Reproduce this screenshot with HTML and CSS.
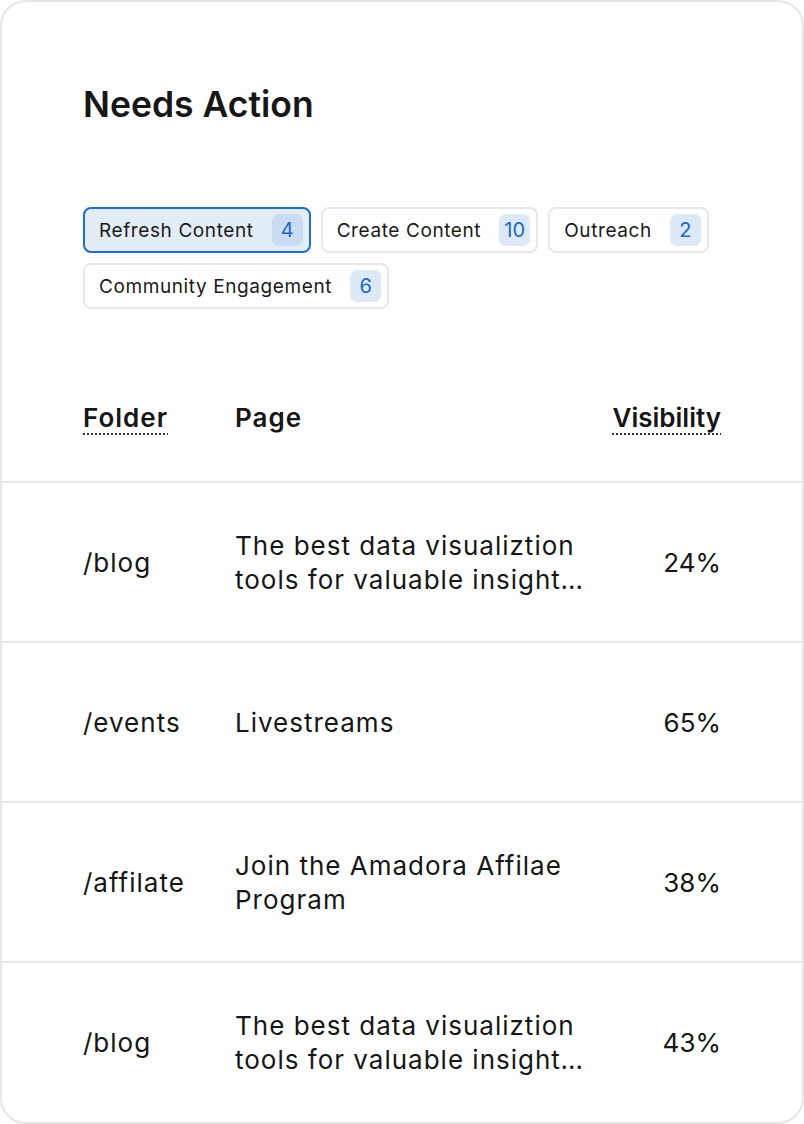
FILE: index.html
```html
<!DOCTYPE html>
<html lang="en">
<head>
    <meta charset="UTF-8">
    <meta name="viewport" content="width=device-width, initial-scale=1.0">
    <title>Needs Action</title>
    <link rel="stylesheet" href="styles.css">
</head>
<body>
    <div class="card">
        <div class="card-top">
            <h1>Needs Action</h1>
            <div class="filters">
                <button class="chip active">Refresh Content <span class="count">4</span></button>
                <button class="chip">Create Content <span class="count">10</span></button>
                <button class="chip">Outreach <span class="count">2</span></button>
                <button class="chip">Community Engagement <span class="count">6</span></button>
            </div>
        </div>

        <div class="table">
            <div class="row head">
                <span class="hint">Folder</span>
                <span>Page</span>
                <span class="num"><span class="hint">Visibility</span></span>
            </div>
            <div class="row">
                <span>/blog</span>
                <span class="page">The best data visualiztion tools for valuable insights and reporting</span>
                <span class="num">24%</span>
            </div>
            <div class="row">
                <span>/events</span>
                <span class="page">Livestreams</span>
                <span class="num">65%</span>
            </div>
            <div class="row">
                <span>/affilate</span>
                <span class="page">Join the Amadora Affilae Program</span>
                <span class="num">38%</span>
            </div>
            <div class="row">
                <span>/blog</span>
                <span class="page">The best data visualiztion tools for valuable insights and reporting</span>
                <span class="num">43%</span>
            </div>
        </div>
    </div>
</body>
</html>
```

FILE: styles.css
```css
body {
    margin: 0;
    font-family: 'Inter', 'Noto Sans', sans-serif;
    color: #1a1a1a;
    background-color: #fff;
}
.card {
    width: 804px;
    height: 1124px;
    box-sizing: border-box;
    border: 2px solid #e6e6e6;
    border-radius: 26px;
    overflow: hidden;
    background-color: #fff;
}
.card-top {
    padding: 81px 81px 0;
}
h1 {
    margin: 0;
    font-size: 35.5px;
    line-height: 44px;
    font-weight: 600;
    color: #171717;
}
.filters {
    display: flex;
    flex-wrap: wrap;
    gap: 10px;
    margin-top: 80px;
}
.chip {
    display: flex;
    align-items: center;
    gap: 18px;
    height: 46px;
    box-sizing: border-box;
    padding: 5px 6px 5px 14px;
    border: 2px solid #e8e8e8;
    border-radius: 8px;
    background-color: #fff;
    font-family: inherit;
    font-size: 19px;
    letter-spacing: 0.6px;
    color: #1a1a1a;
    cursor: pointer;
}
.chip.active {
    background-color: #e3edf8;
    border-color: #1f6fc7;
}
.count {
    min-width: 31px;
    height: 32px;
    line-height: 32px;
    padding: 0 2px;
    box-sizing: border-box;
    border-radius: 7px;
    background-color: #dde9f6;
    color: #1c68c4;
    text-align: center;
    font-size: 20px;
    letter-spacing: 0;
}
.chip.active .count {
    background-color: #c9dcf1;
}
.table {
    margin-top: 46px;
}
.row {
    display: grid;
    grid-template-columns: 152px 360px 1fr;
    align-items: center;
    height: 160px;
    box-sizing: border-box;
    padding: 2px 81px 0;
    border-top: 2px solid #e8e8e8;
    font-size: 26px;
    line-height: 34px;
    letter-spacing: 1px;
    color: #161616;
}
.row.head {
    height: auto;
    padding-top: 46px;
    padding-bottom: 46px;
    border-top: none;
    font-weight: 600;
    letter-spacing: 1px;
}
.hint {
    text-decoration: underline dotted #333;
    text-decoration-thickness: 2px;
    text-underline-offset: 6px;
}
.page {
    display: -webkit-box;
    -webkit-line-clamp: 2;
    -webkit-box-orient: vertical;
    overflow: hidden;
}
.num {
    text-align: right;
    letter-spacing: 0;
}
```
